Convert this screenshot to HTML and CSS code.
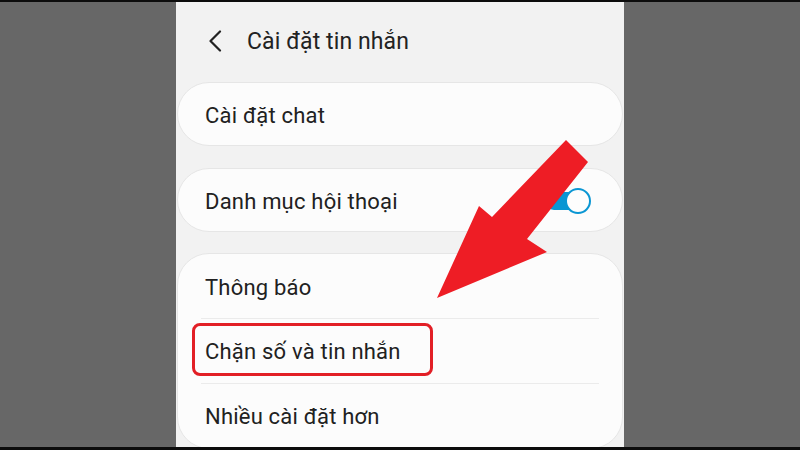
FILE: index.html
```html
<!DOCTYPE html>
<html lang="vi">
<head>
<meta charset="utf-8">
<title>Cài đặt tin nhắn</title>
<link rel="stylesheet" href="styles.css">
</head>
<body>
<div class="frame">
  <div class="screen">
    <header class="topbar">
      <svg class="back" width="14" height="22" viewBox="0 0 14 22" aria-hidden="true">
        <path d="M12 1.5 L2.5 11 L12 20.5" fill="none" stroke="#222" stroke-width="2.2" stroke-linecap="round" stroke-linejoin="round"/>
      </svg>
      <h1 class="title">Cài đặt tin nhắn</h1>
    </header>

    <section class="card card-first">
      <div class="row">Cài đặt chat</div>
    </section>

    <section class="card">
      <div class="row row-toggle">
        <span>Danh mục hội thoại</span>
        <span class="switch"><span class="knob"></span></span>
      </div>
    </section>

    <section class="card card-list">
      <div class="row">Thông báo</div>
      <div class="row">Chặn số và tin nhắn</div>
      <div class="row">Nhiều cài đặt hơn</div>
    </section>

    <div class="mark"></div>
    <svg class="pointer" width="160" height="170" viewBox="0 0 160 170" aria-hidden="true">
      <polygon points="130,0 152,22 91,99 111,112 1,158 43,66 56,77" fill="#ee1d25"/>
    </svg>
  </div>
</div>
</body>
</html>
```
FILE: styles.css
```css
* { box-sizing: border-box; }

html, body {
  margin: 0;
  padding: 0;
}

body {
  font-family: Roboto, "Noto Sans", "DejaVu Sans", sans-serif;
  color: #212121;
}

.frame {
  width: 800px;
  height: 450px;
  background: #676767;
  border-top: 2px solid #0c0c0c;
  border-bottom: 3px solid #0c0c0c;
  display: flex;
  justify-content: center;
  overflow: hidden;
}

.screen {
  position: relative;
  width: 448px;
  height: 100%;
  background: #f2f2f2;
  padding: 0 1px;
  overflow: hidden;
}

.topbar {
  height: 80px;
  display: flex;
  align-items: center;
  padding-left: 31px;
  padding-bottom: 2px;
}

.back { flex: none; }

.title {
  margin: 0 0 0 25px;
  font-size: 23px;
  font-weight: 400;
  color: #222;
  letter-spacing: 0.1px;
}

.card {
  background: #fcfcfc;
  border: 1px solid #e6e6e6;
  border-radius: 32px;
  margin-bottom: 21px;
}

.card-first { margin-bottom: 22px; }

.row {
  height: 62px;
  display: flex;
  align-items: center;
  padding: 2px 27px 0;
  font-size: 22px;
  letter-spacing: 0.2px;
}

.row-toggle {
  justify-content: space-between;
  padding-right: 31px;
}

.card-list .row {
  height: 65px;
  position: relative;
}

.card-list .row:first-child {
  height: 64px;
}

.card-list .row + .row::before {
  content: "";
  position: absolute;
  left: 23px;
  right: 23px;
  top: 0;
  height: 1px;
  background: #ebebeb;
}

.switch {
  position: relative;
  width: 46px;
  height: 26px;
  display: flex;
  align-items: center;
}

.switch::before {
  content: "";
  width: 40px;
  height: 18px;
  border-radius: 9px;
  background: #0a96d3;
}

.knob {
  position: absolute;
  right: 0;
  top: 0;
  width: 26px;
  height: 26px;
  border-radius: 50%;
  background: #fdfdfd;
  border: 2px solid #0a96d3;
}

/* highlight frame around the blocking entry */
.mark {
  position: absolute;
  left: 16px;
  top: 321px;
  width: 241px;
  height: 53px;
  border: 3px solid #e21f26;
  border-radius: 8px;
}

.pointer {
  position: absolute;
  left: 260px;
  top: 138px;
}
```
